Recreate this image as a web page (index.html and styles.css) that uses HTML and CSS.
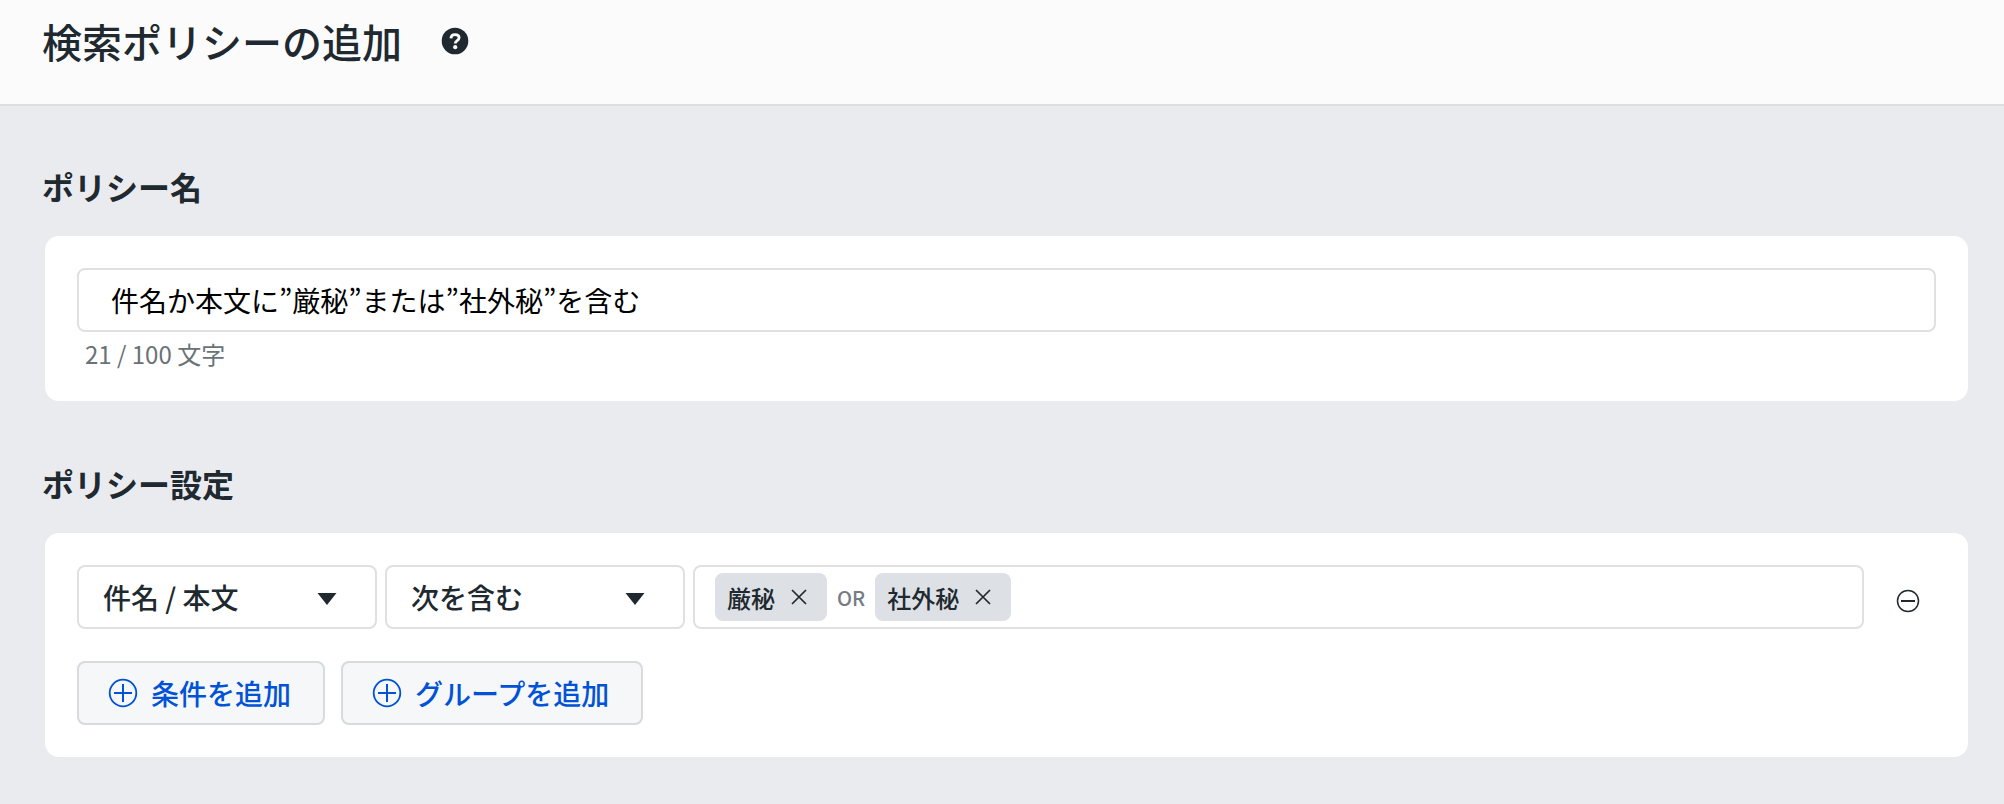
FILE: index.html
```html
<!DOCTYPE html>
<html lang="ja">
<head>
    <meta charset="UTF-8">
    <meta name="viewport" content="width=device-width, initial-scale=1.0">
    <title>検索ポリシーの追加</title>
    <link rel="stylesheet" href="styles.css">
</head>
<body>

<header class="page-header">
    <h1>検索ポリシーの追加</h1>
    <button type="button" class="icon-button" aria-label="ヘルプ">
        <svg width="28" height="28" viewBox="0 0 28 28" fill="none">
            <circle cx="14" cy="14" r="13.3" fill="#20292f"/>
            <path d="M9.9 11.4c.1-2.4 1.7-3.8 4.1-3.8s4.1 1.2 4.1 3.2c0 2.9-3.9 2.8-3.9 5.8" stroke="#fbfbfb" stroke-width="2.8"/>
            <circle cx="14.2" cy="20.2" r="2.1" fill="#fbfbfb"/>
        </svg>
    </button>
</header>

<main>
    <!-- ポリシー名 -->
    <section>
        <h2><label for="policyName">ポリシー名</label></h2>
        <div class="card">
            <input type="text" id="policyName" class="name-input" maxlength="100" value="件名か本文に”厳秘”または”社外秘”を含む">
            <p class="counter">21 / 100 文字</p>
        </div>
    </section>

    <!-- ポリシー設定 -->
    <section>
        <h2>ポリシー設定</h2>
        <div class="card">
            <div class="condition">
                <div class="select-box">
                    <select aria-label="対象">
                        <option>件名 / 本文</option>
                    </select>
                    <svg class="arrow" width="20" height="12" viewBox="0 0 20 12"><path d="M0.5 0h19L10 12z" fill="#20292f"/></svg>
                </div>
                <div class="select-box">
                    <select aria-label="条件">
                        <option>次を含む</option>
                    </select>
                    <svg class="arrow" width="20" height="12" viewBox="0 0 20 12"><path d="M0.5 0h19L10 12z" fill="#20292f"/></svg>
                </div>
                <div class="keywords">
                    <span class="chip">厳秘
                        <button type="button" class="icon-button" aria-label="厳秘を削除">
                            <svg width="16" height="16" viewBox="0 0 16 16" stroke="#20292f" stroke-width="1.7"><path d="M1 1l14 14M15 1L1 15"/></svg>
                        </button>
                    </span>
                    <span class="or">OR</span>
                    <span class="chip">社外秘
                        <button type="button" class="icon-button" aria-label="社外秘を削除">
                            <svg width="16" height="16" viewBox="0 0 16 16" stroke="#20292f" stroke-width="1.7"><path d="M1 1l14 14M15 1L1 15"/></svg>
                        </button>
                    </span>
                    <input type="text" class="keyword-input" aria-label="キーワード">
                </div>
                <button type="button" class="icon-button remove" aria-label="条件を削除">
                    <svg width="24" height="24" viewBox="0 0 24 24" fill="none" stroke="#20292f">
                        <circle cx="12" cy="12" r="10.5" stroke-width="1.5"/>
                        <path d="M5 12h14" stroke-width="2"/>
                    </svg>
                </button>
            </div>
            <div class="actions">
                <button type="button" class="add-button">
                    <svg width="30" height="30" viewBox="0 0 30 30" fill="none" stroke="#0052d6" stroke-width="2">
                        <circle cx="15" cy="15" r="13.3" stroke-width="1.8"/>
                        <path d="M6 15h18M15 6v18"/>
                    </svg>
                    条件を追加
                </button>
                <button type="button" class="add-button">
                    <svg width="30" height="30" viewBox="0 0 30 30" fill="none" stroke="#0052d6" stroke-width="2">
                        <circle cx="15" cy="15" r="13.3" stroke-width="1.8"/>
                        <path d="M6 15h18M15 6v18"/>
                    </svg>
                    グループを追加
                </button>
            </div>
        </div>
    </section>
</main>

</body>
</html>
```
FILE: styles.css
```css
* {
    box-sizing: border-box;
}
body {
    margin: 0;
    background-color: #eaebef;
    color: #20292f;
    font-family: "Noto Sans CJK JP", sans-serif;
    font-size: 28px;
}
button, input, select {
    font: inherit;
    color: inherit;
}
.page-header {
    display: flex;
    align-items: center;
    gap: 39px;
    padding: 11px 42px 33px;
    background-color: #fbfbfb;
    border-bottom: 2px solid #dddfdf;
}
h1 {
    margin: 0;
    font-size: 40px;
    font-weight: 500;
    line-height: 60px;
}
main {
    padding: 56px 36px 46px 42px;
}
section + section {
    margin-top: 58px;
}
h2 {
    margin: 0 0 26px;
    font-size: 32px;
    font-weight: 700;
    line-height: 48px;
}
.card {
    margin-left: 3px;
    padding: 32px;
    background-color: white;
    border-radius: 14px;
}
.name-input {
    display: block;
    width: 100%;
    height: 64px;
    padding: 0 32px;
    border: 2px solid #e0e0e0;
    border-radius: 8px;
    color: black;
}
.counter {
    margin: 4px 8px -3px;
    color: #697277;
    font-size: 24px;
    line-height: 36px;
}
.condition {
    display: flex;
    gap: 8px;
}
.select-box {
    display: grid;
    align-items: center;
    width: 300px;
}
.select-box > * {
    grid-area: 1 / 1;
}
.select-box select {
    width: 100%;
    height: 64px;
    padding: 0 64px 0 24px;
    background: none;
    border: 2px solid #e0e0e0;
    border-radius: 8px;
    font-weight: 500;
    appearance: none;
}
.arrow {
    justify-self: end;
    margin: 4px 40px 0 0;
    pointer-events: none;
}
.keywords {
    display: flex;
    flex: 1;
    align-items: center;
    min-width: 0;
    height: 64px;
    padding: 0 20px;
    border: 2px solid #e0e0e0;
    border-radius: 8px;
}
.chip {
    display: flex;
    align-items: center;
    gap: 16px;
    height: 48px;
    padding: 0 20px 0 12px;
    background-color: #dde0e5;
    border-radius: 8px;
    font-size: 24px;
    font-weight: 500;
}
.or {
    margin: 0 10px;
    color: #757c86;
    font-size: 20px;
    font-weight: 500;
}
.keyword-input {
    flex: 1;
    min-width: 0;
    border: none;
    outline: none;
}
.icon-button {
    display: flex;
    padding: 0;
    background: none;
    border: none;
    cursor: pointer;
}
.remove {
    align-self: center;
    margin: 8px 16px 0 24px;
}
.actions {
    display: flex;
    gap: 16px;
    margin-top: 32px;
}
.add-button {
    display: flex;
    align-items: center;
    gap: 13px;
    height: 64px;
    padding: 0 32px 0 29px;
    background-color: #f5f7f9;
    border: 2px solid #d8dadd;
    border-radius: 8px;
    color: #0052d6;
    font-weight: 500;
    cursor: pointer;
}
```
